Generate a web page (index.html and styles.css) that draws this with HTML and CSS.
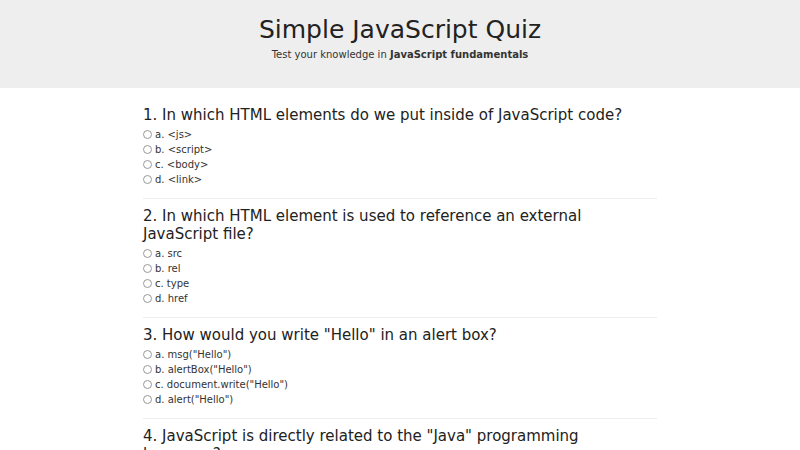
FILE: index.html
```html
<!DOCTYPE html>
<html lang="en">

<head>
    <meta charset="UTF-8">
    <meta name="viewport" content="width=device-width, initial-scale=1.0">
    <title>Simple JavaScript Quiz</title>
    <link rel="stylesheet" href="styles.css">
</head>

<body>
    <header class="quiz-header">
        <h1>Simple JavaScript Quiz</h1>
        <p>Test your knowledge in <strong>JavaScript fundamentals</strong></p>
    </header>

    <form class="quiz" id="quiz">
        <div class="question">
            <h3>1. In which HTML elements do we put inside of JavaScript code?</h3>
            <label><input type="radio" name="q1" value="a"> a. &lt;js&gt;</label>
            <label><input type="radio" name="q1" value="b"> b. &lt;script&gt;</label>
            <label><input type="radio" name="q1" value="c"> c. &lt;body&gt;</label>
            <label><input type="radio" name="q1" value="d"> d. &lt;link&gt;</label>
        </div>

        <div class="question">
            <h3>2. In which HTML element is used to reference an external JavaScript file?</h3>
            <label><input type="radio" name="q2" value="a"> a. src</label>
            <label><input type="radio" name="q2" value="b"> b. rel</label>
            <label><input type="radio" name="q2" value="c"> c. type</label>
            <label><input type="radio" name="q2" value="d"> d. href</label>
        </div>

        <div class="question">
            <h3>3. How would you write "Hello" in an alert box?</h3>
            <label><input type="radio" name="q3" value="a"> a. msg("Hello")</label>
            <label><input type="radio" name="q3" value="b"> b. alertBox("Hello")</label>
            <label><input type="radio" name="q3" value="c"> c. document.write("Hello")</label>
            <label><input type="radio" name="q3" value="d"> d. alert("Hello")</label>
        </div>

        <div class="question">
            <h3>4. JavaScript is directly related to the "Java" programming language?</h3>
            <label><input type="radio" name="q4" value="a"> a. True</label>
            <label><input type="radio" name="q4" value="b"> b. False</label>
        </div>
    </form>
</body>

</html>
```

FILE: styles.css
```css
/* General styling */
body {
    font-family: "DejaVu Sans", sans-serif;
    color: #222;
    margin: 0;
    padding: 0;
    background: #fff;
}

.quiz-header {
    background: #eee;
    text-align: center;
    padding: 15px 0 28px;
}

.quiz-header h1 {
    font-size: 25px;
    font-weight: normal;
    margin: 0 0 5px;
}

.quiz-header p {
    font-size: 10px;
    color: #333;
    margin: 0;
}

.quiz {
    width: 514px;
    margin: 0 auto;
    padding-top: 18px;
}

.question {
    border-bottom: 1px solid #eee;
    padding-bottom: 11px;
    margin-bottom: 8px;
}

.question h3 {
    font-size: 15px;
    font-weight: normal;
    line-height: 18px;
    margin: 0 0 3px;
}

.question label {
    display: flex;
    align-items: center;
    font-size: 10px;
    color: #333;
    height: 15px;
}

.question input {
    appearance: none;
    width: 9px;
    height: 9px;
    margin: 0 3px 0 0;
    border: 1px solid #999;
    border-radius: 50%;
    background: #fff;
}

.question input:checked {
    background: radial-gradient(#333 35%, #fff 45%);
}
```
